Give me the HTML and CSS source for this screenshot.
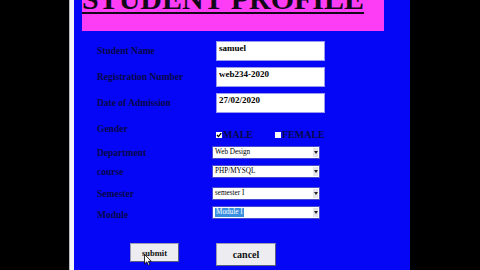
FILE: index.html
```html
<!DOCTYPE html>
<html>
<head>
<meta charset="utf-8">
<link rel="stylesheet" href="styles.css">
</head>
<body>
<div class="edge"></div>
<div class="strip"></div>
<main class="panel">
  <div class="header"><h1 class="title">STUDENT PROFILE</h1></div>
  <form class="form">
    <div class="row r-name"><label class="lbl">Student Name</label><div class="field text">samuel</div></div>
    <div class="row r-reg"><label class="lbl">Registration Number</label><div class="field text">web234-2020</div></div>
    <div class="row r-date"><label class="lbl">Date of Admission</label><div class="field text">27/02/2020</div></div>
    <div class="row r-gender">
      <label class="lbl">Gender</label>
      <div class="checks">
        <span class="check"><span class="box"><svg width="6" height="6" viewBox="0 0 6 6"><path d="M1 3 L2.5 4.6 L5.2 1.2" fill="none" stroke="#000" stroke-width="1.3"/></svg></span>MALE</span>
        <span class="check"><span class="box"></span>FEMALE</span>
      </div>
    </div>
    <div class="row r-dept"><label class="lbl">Department</label><div class="select"><span class="opt">Web Design</span><span class="arrow"><svg width="4" height="3" viewBox="0 0 4 3"><path d="M0 0 H4 L2 3 Z" fill="#222"/></svg></span></div></div>
    <div class="row r-course"><label class="lbl">course</label><div class="select"><span class="opt">PHP/MYSQL</span><span class="arrow"><svg width="4" height="3" viewBox="0 0 4 3"><path d="M0 0 H4 L2 3 Z" fill="#222"/></svg></span></div></div>
    <div class="row r-sem"><label class="lbl">Semester</label><div class="select"><span class="opt">semester I</span><span class="arrow"><svg width="4" height="3" viewBox="0 0 4 3"><path d="M0 0 H4 L2 3 Z" fill="#222"/></svg></span></div></div>
    <div class="row r-mod"><label class="lbl lbl-low">Module</label><div class="select"><span class="opt sel">Module I</span><span class="arrow"><svg width="4" height="3" viewBox="0 0 4 3"><path d="M0 0 H4 L2 3 Z" fill="#222"/></svg></span></div></div>
    <div class="buttons">
      <button type="button" class="btn btn-submit">submit</button>
      <button type="button" class="btn btn-cancel">cancel</button>
      <svg class="cursor" width="8" height="12" viewBox="0 0 8 12"><path d="M0.5 0.5 V10 L2.8 7.8 L4.4 11.3 L5.8 10.6 L4.3 7.3 H7.3 Z" fill="#fff" stroke="#000" stroke-width="0.8"/></svg>
    </div>
  </form>
</main>
<div class="edge fill"></div>
</body>
</html>
```
FILE: styles.css
```css
* { box-sizing: border-box; }
html, body { margin: 0; padding: 0; }
body {
  background: #000;
  display: flex;
  height: 270px;
  overflow: hidden;
  font-family: "Liberation Serif", "Times New Roman", serif;
}
.edge { width: 69px; flex: none; background: #000; }
.edge.fill { flex: 1; }
.strip {
  width: 5px;
  flex: none;
  background: #f6f6fa;
  border-left: 1px solid #b8b8c0;
}
.panel {
  width: 336px;
  flex: none;
  background: #0606f6;
  padding: 0 26px 0 8px;
  display: flex;
  flex-direction: column;
}
.header {
  height: 31px;
  background: #fd3df6;
  display: flex;
  flex-direction: column;
}
.title {
  margin: -16px 0 0 0;
  font-size: 30px;
  line-height: 30px;
  font-weight: 700;
  color: #120818;
  text-decoration: underline;
  text-decoration-thickness: 2px;
  text-underline-offset: 3px;
  white-space: nowrap;
}
.form {
  display: flex;
  flex-direction: column;
  padding: 10px 0 0 15px;
}
.row {
  display: flex;
  align-items: center;
}
.lbl {
  width: 115px;
  flex: none;
  font-size: 9.5px;
  font-weight: 700;
  color: #06064a;
  white-space: nowrap;
}
.lbl-low { padding-top: 5px; }
.r-name { height: 20px; }
.r-reg { height: 20px; margin-top: 6px; }
.r-date { height: 20px; margin-top: 6px; }
.r-gender { height: 18px; margin-top: 9px; align-items: flex-start; }
.r-gender .lbl { line-height: 14px; }
.r-dept { height: 13px; margin-top: 6px; }
.r-course { height: 13px; margin-top: 6px; }
.r-sem { height: 13px; margin-top: 9px; }
.r-mod { height: 13px; margin-top: 6px; }

.field.text {
  margin-left: 4px;
  width: 109px;
  height: 20px;
  background: #fff;
  border: 1px solid #9a9af0;
  padding: 1px 2px;
  font-size: 9px;
  font-weight: 700;
  color: #000;
  line-height: 10px;
}
.checks {
  align-self: flex-end;
  margin-left: 4px;
  display: flex;
  gap: 22px;
  height: 10px;
  align-items: center;
}
.check {
  display: flex;
  align-items: center;
  gap: 1px;
  font-size: 10px;
  font-weight: 700;
  color: #06064a;
  line-height: 10px;
}
.box {
  width: 6px;
  height: 6px;
  background: #fff;
  display: flex;
}
.select {
  width: 108px;
  height: 13px;
  background: #fff;
  border: 1px solid #4a4ad0;
  display: flex;
  align-items: center;
  padding-left: 2px;
}
.opt {
  flex: 1;
  font-size: 7.2px;
  color: #000;
  line-height: 9px;
  white-space: nowrap;
}
.opt.sel {
  flex: none;
  background: #3a8fe0;
  color: #fff;
  padding: 0 1px;
  margin-right: auto;
}
.arrow {
  width: 5px;
  height: 9px;
  margin-right: 1px;
  background: #e4e4ea;
  display: flex;
  align-items: center;
  justify-content: center;
}
.buttons {
  position: relative;
  display: flex;
  align-items: flex-start;
  margin-top: 24px;
  padding-left: 33px;
  gap: 37px;
}
.btn {
  margin: 0;
  background: #ededf1;
  border: 1px solid #9c9cb4;
  border-bottom-color: #5c5c80;
  border-right-color: #5c5c80;
  font-family: "Liberation Serif", "Times New Roman", serif;
  font-weight: 700;
  color: #111;
  padding: 0;
}
.btn-submit { width: 49px; height: 19px; font-size: 8.5px; }
.btn-cancel { width: 60px; height: 23px; font-size: 10px; }
.cursor {
  position: absolute;
  left: 47px;
  top: 11px;
}
```
